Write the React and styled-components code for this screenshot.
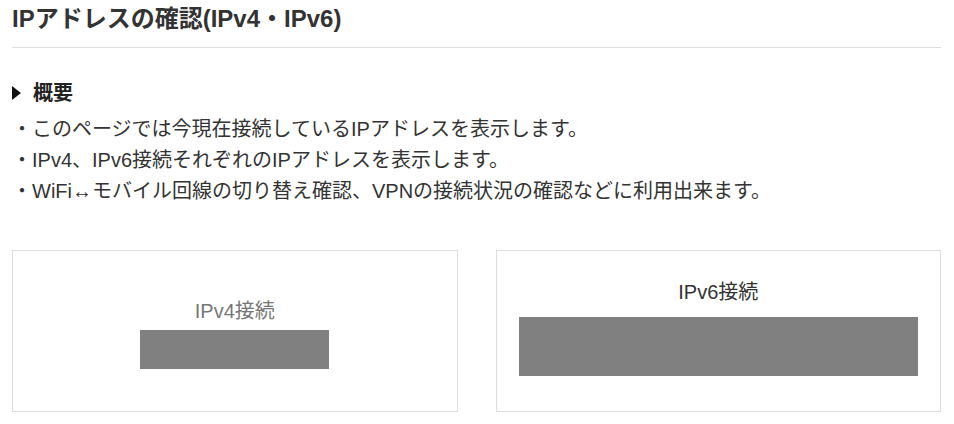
import React from "react";
import styled, { createGlobalStyle } from "styled-components";

const Global = createGlobalStyle`
  html, body { margin: 0; padding: 0; background: #fff; }
  body {
    font-family: "Liberation Sans", Arial, "Noto Sans CJK JP", sans-serif;
    color: #333;
  }
`;

const Page = styled.div`
  padding: 0 13px 0 12px;
`;

const Title = styled.h1`
  margin: 0;
  font-size: 24px;
  font-weight: bold;
  line-height: 38px;
  color: #333;
  padding-bottom: 9px;
  border-bottom: 1px solid #ddd;
`;

const Section = styled.section`
  margin-top: 30px;
`;

const Heading = styled.h2`
  margin: 0;
  display: flex;
  align-items: center;
  gap: 12px;
  font-size: 20px;
  font-weight: bold;
  line-height: 30px;
  color: #222;
  &::before {
    content: "";
    width: 0;
    height: 0;
    border-left: 9px solid #111;
    border-top: 7px solid transparent;
    border-bottom: 7px solid transparent;
  }
`;

const List = styled.ul`
  margin: 6px 0 0;
  padding: 0;
  list-style: none;
`;

const Item = styled.li`
  font-size: 20px;
  line-height: 31px;
  color: #333;
`;

const Cards = styled.div`
  margin-top: 43px;
  display: grid;
  grid-template-columns: 1fr 1fr;
  gap: 38px;
`;

const Card = styled.div`
  height: 162px;
  box-sizing: border-box;
  border: 1px solid #ddd;
  display: flex;
  flex-direction: column;
  align-items: center;
  justify-content: center;
`;

const Label = styled.div`
  font-size: 20px;
  line-height: 26px;
  color: ${(p) => (p.$muted ? "#777" : "#333")};
`;

const Masked = styled.div`
  background: #808080;
  width: ${(p) => p.$w};
  height: ${(p) => p.$h}px;
  margin-top: ${(p) => p.$gap}px;
  margin-bottom: ${(p) => p.$mb}px;
`;

export default function App() {
  return (
    <>
      <Global />
      <Page>
        <Title>IPアドレスの確認(IPv4・IPv6)</Title>
        <Section>
          <Heading>概要</Heading>
          <List>
            <Item>・このページでは今現在接続しているIPアドレスを表示します。</Item>
            <Item>・IPv4、IPv6接続それぞれのIPアドレスを表示します。</Item>
            <Item>・WiFi↔モバイル回線の切り替え確認、VPNの接続状況の確認などに利用出来ます。</Item>
          </List>
        </Section>
        <Cards>
          <Card>
            <Label $muted>IPv4接続</Label>
            <Masked $w="189px" $h={39} $gap={6} $mb={-4} />
          </Card>
          <Card>
            <Label>IPv6接続</Label>
            <Masked $w="90%" $h={59} $gap={12} $mb={8} />
          </Card>
        </Cards>
      </Page>
    </>
  );
}
